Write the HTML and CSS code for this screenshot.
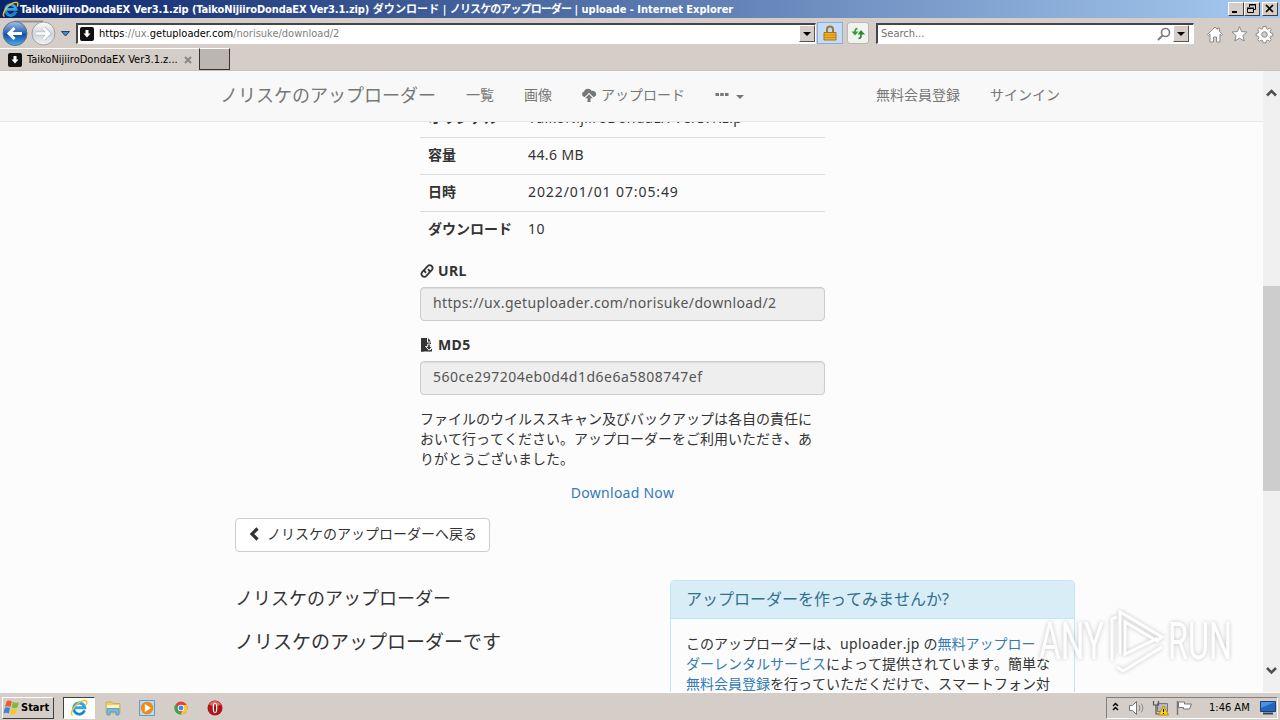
FILE: index.html
```html
<!DOCTYPE html>
<html lang="ja">
<head>
<meta charset="UTF-8" />
<title>TaikoNijiiroDondaEX Ver3.1.zip | ノリスケのアップローダー</title>
<link rel="stylesheet" href="styles.css">
</head>
<body>

<svg width="0" height="0" class="defs">
    <defs>
        <symbol id="ie" viewBox="0 0 18 18">
            <path d="M14.5 11.5A5.6 5.6 0 1 1 14.8 8.800H5" fill="none" stroke="#38a5e3" stroke-width="3"/>
            <path d="M14.5 11.5A5.6 5.6 0 0 1 4 11" fill="none" stroke="#1679c4" stroke-width="1.500"/>
            <path d="M2.500 16.500C-1 14 6 3 14 1.500c3-.5 3.500 1.500 2 4.500" fill="none" stroke="#f0c431" stroke-width="1.500"/>
        </symbol>
        <symbol id="fav" viewBox="0 0 14 14">
            <rect width="14" height="14" rx="2" fill="#111"/>
            <path d="M5.500 3h3v3.500h2L7 10.500 3.500 6.500h2z" fill="#fff"/>
        </symbol>
    </defs>
</svg>

<div class="titlebar">
    <svg class="title-icon" width="17" height="17"><use href="#ie"/></svg>
    <div class="title-text"><span class="t1">TaikoNijiiroDondaEX Ver3.1.zip (TaikoNijiiroDondaEX Ver3.1.zip)</span> <span class="tj1">ダウンロード</span> | <span class="tj2">ノリスケのアップローダー</span> | <span class="t2">uploade - Internet Explorer</span></div>
    <div class="win-buttons">
        <span class="win-btn"><svg width="13" height="11"><path d="M3 9h5" stroke="#000" stroke-width="2"/></svg></span>
        <span class="win-btn"><svg width="13" height="11"><path d="M4.500 4V1.500h6v5H9M4 2h7M2.500 5.500h6v4h-6zM2 5h7" fill="none" stroke="#000"/></svg></span>
        <span class="win-btn last"><svg width="13" height="11"><path d="M3 2l7 7M10 2L3 9" stroke="#000" stroke-width="1.700"/></svg></span>
    </div>
</div>

<div class="toolbar">
    <svg class="nav-buttons" width="74" height="30" viewBox="0 0 74 30">
        <defs>
            <linearGradient id="gb" x1="0" y1="0" x2="0" y2="1"><stop offset="0" stop-color="#a5c4ea"/><stop offset=".45" stop-color="#2c67b8"/><stop offset=".55" stop-color="#1550a5"/><stop offset="1" stop-color="#49b4f3"/></linearGradient>
            <linearGradient id="gf" x1="0" y1="0" x2="0" y2="1"><stop offset="0" stop-color="#fff"/><stop offset=".5" stop-color="#cfd3da"/><stop offset="1" stop-color="#f2f4f7"/></linearGradient>
        </defs>
        <path d="M15 3.500H43" stroke="#97918d" stroke-width="2"/>
        <circle cx="15" cy="15.500" r="12" fill="url(#gb)" stroke="#65717f"/>
        <circle cx="43.500" cy="15.500" r="11.500" fill="url(#gf)" stroke="#a09e9f"/>
        <path d="M22 15.500H9M14.500 10L9 15.500l5.500 5.500" fill="none" stroke="#fff" stroke-width="3"/>
        <path d="M36 15.500h13M43.500 10l5.500 5.500-5.500 5.500" fill="none" stroke="#b8bbc0" stroke-width="4"/>
        <path d="M36 15.500h13M43.500 10l5.500 5.500-5.500 5.500" fill="none" stroke="#fff" stroke-width="2.500"/>
        <path d="M61.500 13.500h8l-4 4.500z" fill="#3f8cd0" stroke="#1c4574"/>
    </svg>
    <div class="address">
        <svg width="14" height="14"><use href="#fav"/></svg>
        <span class="address-text"><b>https</b>://ux.<b>getuploader.com</b>/norisuke/download/2</span>
        <span class="drop"></span>
    </div>
    <div class="tool lock">
        <svg width="14" height="18" viewBox="0 0 14 18"><path d="M4 9V5.500a3 3 0 0 1 6 0V9" fill="none" stroke="#9a7a35" stroke-width="2"/><path d="M1 8.500h12v7.500H1z" fill="#eeb12d" stroke="#a9740f"/><path d="M1 11h12M1 13.500h12" stroke="#c98b14"/></svg>
    </div>
    <div class="tool refresh">
        <svg width="18" height="18" viewBox="0 0 18 18"><path d="M8.500 4.500Q6 4.500 6 8v2" fill="none" stroke="#379b38" stroke-width="1.700"/><path d="M2.500 7.500h7L6 11.500z" fill="#379b38"/><path d="M9.500 14.500q2.500 0 2.500-3V9" fill="none" stroke="#2a8c2c" stroke-width="1.700"/><path d="M8.500 10.500h7.500L12 6z" fill="#2a8c2c"/></svg>
    </div>
    <div class="search">
        <span class="search-text">Search...</span>
        <svg width="14" height="14" viewBox="0 0 14 14"><circle cx="8.500" cy="5.500" r="4" fill="none" stroke="#808080" stroke-width="1.700"/><path d="M5.500 8.500L1 13" stroke="#808080" stroke-width="2"/></svg>
        <span class="drop"></span>
    </div>
    <svg class="tool-icons" width="68" height="20" viewBox="0 0 68 20" fill="#fff" stroke="#8d8a88">
        <path d="M1.500 10.500L9 3l2.500 2.500V4h2v3.500l3 3-1 1-1.500-1.300V18h-3.500v-5h-3v5H4v-7.800l-1.500 1.300z"/>
        <path d="M33.500 2.500l2.100 5 5.400.5-4.100 3.600 1.300 5.400-4.700-2.900-4.700 2.900 1.300-5.400L26 8l5.400-.5z"/>
        <path d="M57 2.500h3l.4 2.100 1.400.6 1.900-1.200 1.600 1.700-1.200 1.900.6 1.300 2.100.5v2.500l-2.100.5-.6 1.400 1.200 1.900-1.700 1.600-1.800-1.200-1.400.6-.4 2.100h-3l-.4-2.100-1.400-.6-1.800 1.200-1.700-1.600 1.200-1.900-.6-1.400-2.100-.5V9.400l2.100-.5.6-1.300-1.200-1.900 1.700-1.700 1.800 1.200 1.400-.6z"/>
        <circle cx="58.500" cy="10.500" r="2.800" fill="#d4cdc6"/>
    </svg>
</div>

<div class="tabs">
    <div class="tab">
        <svg width="14" height="14"><use href="#fav"/></svg>
        <span class="tab-text">TaikoNijiiroDondaEX Ver3.1.z...</span>
        <svg width="8" height="8"><path d="M1 1l6 6M7 1L1 7" stroke="#8a8683" stroke-width="2"/></svg>
    </div>
    <div class="new-tab"></div>
</div>

<div class="viewport">
    <div class="page">
        <nav class="navbar">
            <a class="brand">ノリスケのアップローダー</a>
            <a>一覧</a>
            <a>画像</a>
            <a class="upload"><svg class="glyph" width="16" height="14" viewBox="0 0 16 14"><path d="M5.500 9H3.400A3 3 0 0 1 1 6.200 2.700 2.700 0 0 1 3.100 3.500 4 4 0 0 1 7 .7c1.700 0 2.800.9 3.500 2.100 2.400-.5 4.700 1 4.700 3.300 0 1.700-1.200 2.900-2.900 2.900L8 4.800 3.800 9z" fill="currentColor"/><path d="M8 6.300L11.800 10.300H9.500V14h-3v-3.700H4.200z" fill="currentColor"/></svg> アップロード</a>
            <a class="more"><svg width="14" height="14" viewBox="0 0 14 14"><path d="M.500 5h3.500v3H.5zM5.200 5h3.500v3H5.200zM10 5h3.500v3H10z" fill="currentColor"/></svg><i class="caret"></i></a>
            <span class="spacer"></span>
            <a>無料会員登録</a>
            <a>サインイン</a>
        </nav>

        <main class="content">
            <section class="detail">
                <table class="table">
                    <tr><th>オリジナル</th><td>TaikoNijiiroDondaEX Ver3.1.zip</td></tr>
                    <tr><th>容量</th><td>44.6 MB</td></tr>
                    <tr><th>日時</th><td class="date">2022/01/01 07:05:49</td></tr>
                    <tr><th>ダウンロード</th><td>10</td></tr>
                </table>
                <div class="form-group">
                    <label><svg width="14" height="14" viewBox="0 0 14 14"><g fill="none" stroke="currentColor" stroke-width="1.800" stroke-linecap="round"><path d="M5.500 8.300C4 7 4.300 5.600 5.300 4.600l2.400-2.500c2.700-2.400 6.300.8 4.200 3.700L10 7.800"/><path d="M8.500 5.700c1.500 1.300 1.200 2.700.2 3.700l-2.400 2.500C3.600 14.300 0 11.100 2.100 8.200L4 6.200"/></g></svg> URL</label>
                    <div class="input">https://ux.getuploader.com/norisuke/download/2</div>
                </div>
                <div class="form-group">
                    <label><svg width="14" height="14" viewBox="0 0 14 14"><path d="M1 0h6v4.500h4V6H7.500v2H5l3.800 4.200L10 11v2.500H1z" fill="currentColor"/><path d="M8 0l3 3.500H8z" fill="currentColor"/><path d="M7.800 6h2.400v2.500h2L9 12.200 5.800 8.500h2z" fill="currentColor" stroke="#fcfcfc" stroke-width=".8"/><path d="M1 10.500l3 3H1zM12 10.500v3H9z" fill="currentColor"/></svg> MD5</label>
                    <div class="input md5">560ce297204eb0d4d1d6e6a5808747ef</div>
                </div>
                <p>ファイルのウイルススキャン及びバックアップは各自の責任に<br>おいて行ってください。アップローダーをご利用いただき、あ<br>りがとうございました。</p>
                <div class="download"><a>Download Now</a></div>
            </section>

            <a class="btn"><svg width="14" height="14" viewBox="0 0 14 14"><path d="M9.500 1.500L4 7l5.500 5.500" fill="none" stroke="#333" stroke-width="3.200"/></svg> ノリスケのアップローダーへ戻る</a>

            <div class="row">
                <div class="about">
                    <h4>ノリスケのアップローダー</h4>
                    <h4 class="sub">ノリスケのアップローダーです</h4>
                </div>
                <div class="panel">
                    <div class="panel-heading">アップローダーを作ってみませんか?</div>
                    <div class="panel-body">このアップローダーは、<span class="latin">uploader.jp</span> の<a>無料アップロー<br>ダーレンタルサービス</a>によって提供されています。簡単な<br><a>無料会員登録</a>を行っていただくだけで、スマートフォン対</div>
                </div>
            </div>
        </main>
    </div>

    <div class="scrollbar">
        <svg width="17" height="17" viewBox="0 0 17 17"><path d="M4 11.500l4.500-4.500 4.500 4.500" fill="none" stroke="#505050" stroke-width="2.500"/></svg>
        <div class="thumb"></div>
        <svg width="17" height="17" viewBox="0 0 17 17"><path d="M4 6l4.500 4.500L13 6" fill="none" stroke="#505050" stroke-width="2.500"/></svg>
    </div>
</div>

<div class="taskbar">
    <div class="start">
        <svg width="18" height="17" viewBox="0 0 18 17"><path d="M3.500 2.500C5.500 1 7 1.500 8.800 2.500L7.500 8C5.700 7 4 6.800 2 8z" fill="#ed5b2a"/><path d="M9.800 3c2 1 4 1.200 6.200 0l-1.500 5.500c-2 1-4 .9-6 0z" fill="#7dbb3c"/><path d="M1.700 9c2-1.200 3.700-.9 5.500 0l-1.500 5.500c-1.800-1-3.500-1-5.200 0z" fill="#3c86d6"/><path d="M8.200 9.500c2 1 4 1.200 6 0l-1.500 5.500c-2 1-4 .9-6 0z" fill="#f9c52d"/></svg>
        <b>Start</b>
    </div>
    <div class="task active"><svg width="18" height="18"><use href="#ie"/></svg></div>
    <div class="task"><svg width="18" height="18" viewBox="0 0 18 18"><path d="M2 3h6l1 1.500h7V14H2z" fill="#ecd06e" stroke="#c4a44b" stroke-width=".7"/><path d="M3 6h12v3H3z" fill="#fff3bd"/><path d="M3 16V9.500h12V16h-3v-3H6v3z" fill="#78b9e2" stroke="#4b8dbb" stroke-width=".7"/></svg></div>
    <div class="task"><svg width="18" height="18" viewBox="0 0 18 18"><path d="M1.500 1.500h15v15h-15z" fill="#b8dcf5" stroke="#5c9fce"/><circle cx="9" cy="9" r="6.300" fill="#f28a16"/><path d="M6.800 5v8L13 9z" fill="#fff"/></svg></div>
    <div class="task"><svg width="18" height="18" viewBox="0 0 18 18"><circle cx="9" cy="9" r="6.500" fill="#e04234"/><path d="M3.200 6L9 9l-.5 6.500A6.500 6.500 0 0 1 3.200 6z" fill="#38a852"/><path d="M9 6h5.800A6.500 6.500 0 0 1 8.500 15.500L11.500 10z" fill="#fbc926"/><circle cx="9" cy="9" r="3.200" fill="#fff"/><circle cx="9" cy="9" r="2.400" fill="#4684ee"/></svg></div>
    <div class="task"><svg width="18" height="18" viewBox="0 0 18 18"><circle cx="9" cy="9" r="7.500" fill="#b51217"/><path d="M3 5.500a7 7 0 0 1 12 0c-3 2-8 2-12 0z" fill="#dc6764"/><ellipse cx="9" cy="9" rx="2.300" ry="5.200" fill="#fff"/><ellipse cx="9" cy="9" rx="1" ry="4.300" fill="#8f0d12"/></svg></div>
    <div class="tray">
        <svg width="94" height="20" viewBox="0 0 94 20">
            <path d="M6 8l2.500-2.500L11 8M6 12l2.500-2.500L11 12" fill="none" stroke="#000" stroke-width="1.500"/>
            <path d="M22.500 7.500h3l4-4v13l-4-4h-3z" fill="#fff" stroke="#777"/><path d="M32 7q2 3 0 6M34.500 5.500q3 4.500 0 9" fill="none" stroke="#888"/>
            <path d="M50.500 5.500h10v8h-10z" fill="#b5b9bd" stroke="#777"/><path d="M46.500 3v4h5V3M49 7v9h4" fill="none" stroke="#555" stroke-width="1.200"/><path d="M56.500 8l5 9h-10z" fill="#fcd40a" stroke="#b69009"/><path d="M56.500 11v3M56.500 15v1" stroke="#000"/>
            <path d="M70.500 3v14" stroke="#777" stroke-width="1.500"/><path d="M71.500 4h6v2h7l-2 5h-6V9.500h-5z" fill="#fff" stroke="#777"/>
        </svg>
        <span class="clock">1:46 AM</span>
        <svg class="monitor" width="16" height="14" viewBox="0 0 16 14"><path d="M.5.500h15v10H.5z" fill="#2566bd" stroke="#1b3f76"/><path d="M1 1h14L1 7z" fill="#4a91df"/><path d="M3 12.500h10" stroke="#344560" stroke-width="2"/></svg>
    </div>
</div>

<svg class="watermark" width="204" height="76" viewBox="0 0 204 76">
    <g class="mark">
        <text x="3" y="55" textLength="65" lengthAdjust="spacingAndGlyphs">ANY</text>
        <text x="132" y="55" textLength="64" lengthAdjust="spacingAndGlyphs">RUN</text>
        <path d="M76 57V15l5-2M84 50V8l42 25-5 4-32-19v32l33-16" fill="none"/>
        <path d="M81 63l6 4 39-24" fill="none"/>
    </g>
</svg>

</body>
</html>
```

FILE: styles.css
```css
* {
    box-sizing: border-box;
}
body {
    margin: 0;
    width: 1280px;
    height: 720px;
    overflow: hidden;
    display: flex;
    flex-direction: column;
    position: relative;
    background: #d5cec8;
    font: 11px/14px "DejaVu Sans Condensed", "Noto Sans CJK JP", sans-serif;
    color: #000;
}
svg {
    flex: none;
}
.defs {
    position: absolute;
}

/* window chrome */
.titlebar {
    height: 18px;
    flex: none;
    display: flex;
    align-items: center;
    padding: 0 2px;
    background: linear-gradient(90deg, #0a246a, #a6caf0);
}
.title-text {
    flex: 1;
    margin-left: 1px;
    padding-top: 1px;
    color: #fff;
    font-weight: bold;
    white-space: nowrap;
}
.t1 {
    letter-spacing: -0.11px;
}
.tj1 {
    letter-spacing: 0.1px;
}
.tj2 {
    letter-spacing: -0.9px;
}
.win-buttons {
    display: flex;
}
.win-btn {
    width: 16px;
    height: 14px;
    background: #d5cec8;
    border: 1px solid;
    border-color: #fff #404040 #404040 #fff;
}
.win-btn.last {
    margin-left: 2px;
}
.win-btn svg {
    display: block;
}
.toolbar {
    height: 30px;
    flex: none;
    display: flex;
    align-items: center;
}
.address, .search {
    display: flex;
    align-items: center;
    height: 21px;
    background: #fff;
    border: 1px solid;
    border-width: 2px 1px 1px 2px;
    border-color: #47434a #fff #fff #47434a;
    padding-left: 2px;
}
.address {
    width: 740px;
    margin-left: 2px;
    font-size: 11px;
}
.address-text {
    flex: 1;
    margin-left: 5px;
    padding-top: 1px;
    color: #808080;
}
.address-text b {
    font-weight: normal;
    color: #000;
}
.drop {
    width: 16px;
    height: 17px;
    background: #d5cec8;
    border: 1px solid;
    border-color: #fff #555 #555 #fff;
    display: flex;
    align-items: center;
    justify-content: center;
}
.drop::before {
    content: "";
    border: 4px solid transparent;
    border-top-color: #000;
    border-bottom: 0;
}
.tool {
    display: flex;
    align-items: center;
    justify-content: center;
    height: 22px;
    border: 1px solid #86aee0;
}
.lock {
    width: 26px;
    margin-left: 1px;
    background: #c4dcf8;
}
.refresh {
    width: 22px;
    margin-left: 4px;
    background: #f2f2f0;
    border-color: #bbb6b1;
    border-radius: 3px;
}
.search {
    width: 318px;
    margin-left: 7px;
    padding-right: 4px;
}
.search-text {
    flex: 1;
    margin-left: 1px;
    padding-top: 1px;
    color: #707070;
}
.search .drop {
    margin-left: 2px;
}
.tool-icons {
    margin: 2px 0 0 12px;
}
.tabs {
    height: 23px;
    flex: none;
    display: flex;
    border-bottom: 1px solid #cac3bd;
}
.tab {
    width: 199px;
    display: flex;
    align-items: center;
    padding: 1px 0 0 8px;
    border-top: 1px solid #fff;
}
.tab-text {
    margin: 0 7px 0 5px;
    width: 150px;
    white-space: nowrap;
}
.new-tab {
    width: 31px;
    height: 22px;
    background: #bdb5b0;
    border: 1px solid #333;
    border-top-color: #fff;
}

/* page */
.viewport {
    height: 621px;
    flex: none;
    display: flex;
}
.page {
    width: 1263px;
    height: 621px;
    overflow: hidden;
    display: flex;
    flex-direction: column;
    background: #fcfcfc;
    color: #333;
    font: 14px/20px "Noto Sans", "Noto Sans CJK JP", sans-serif;
    font-kerning: none;
}
.page a {
    color: #337ab7;
}
.page td, .latin, label {
    letter-spacing: 0.4px;
}
.page .date {
    letter-spacing: 0.9px;
}
.navbar {
    height: 51px;
    flex: none;
    display: flex;
    padding: 0 188px 0 205px;
    background: #f8f8f8;
    border-bottom: 1px solid #e7e7e7;
}
.page .navbar a {
    padding: 12px 15px 15px;
    color: #777;
    display: flex;
    align-items: center;
    white-space: nowrap;
}
.page .navbar .brand {
    font-size: 18px;
}
.page .navbar .upload {
    padding-left: 14px;
}
.glyph {
    margin-right: 4px;
}
.navbar .spacer {
    flex: 1;
}
.caret {
    border: 4px solid transparent;
    border-top-color: #777;
    border-bottom: 0;
    margin: 5px 0 0 7px;
}
.content {
    flex: 1;
    min-height: 0;
    overflow: hidden;
    padding-left: 235px;
}
.detail {
    width: 405px;
    margin: -22px 0 0 185px;
}
.table {
    width: 100%;
    border-collapse: collapse;
    margin-bottom: 13px;
}
.table tr {
    height: 37px;
}
.table th, .table td {
    padding: 7px 8px 9px;
    border-top: 1px solid #ddd;
    text-align: left;
    height: 37px;
}
.table th {
    width: 100px;
    white-space: nowrap;
}
.form-group {
    margin-bottom: 15px;
}
.form-group label {
    display: flex;
    align-items: center;
    gap: 4px;
    height: 20px;
    padding-bottom: 2px;
    margin-bottom: 5px;
    font-weight: bold;
}
.input {
    height: 34px;
    padding: 5px 12px;
    background: #eee;
    border: 1px solid #ccc;
    border-radius: 4px;
    box-shadow: inset 0 1px 1px rgba(0, 0, 0, .075);
    color: #555;
    letter-spacing: 0.35px;
}
.md5 {
    letter-spacing: 0.5px;
}
.detail p {
    margin: -1px 0 14px;
    white-space: nowrap;
}
.download {
    text-align: center;
    margin-bottom: 15px;
    letter-spacing: 0.25px;
}
.page .btn {
    display: flex;
    align-items: center;
    gap: 5px;
    width: 255px;
    height: 34px;
    padding: 0 12px 2px;
    background: #fff;
    border: 1px solid #ccc;
    border-radius: 4px;
    color: #333;
    white-space: nowrap;
}
.row {
    display: flex;
    margin-top: 28px;
}
.about {
    width: 435px;
}
.about h4 {
    margin: 8px 0 24px;
    font-size: 18px;
    line-height: 20px;
    font-weight: normal;
}
.about .sub {
    font-size: 19px;
}
.panel {
    width: 405px;
    height: 200px;
    border: 1px solid #bce8f1;
    border-radius: 4px;
    background: #fcfcfc;
}
.panel-heading {
    height: 38px;
    padding: 9px 15px;
    font-size: 16px;
    line-height: 19px;
    background: #d9edf7;
    border-bottom: 1px solid #bce8f1;
    color: #31708f;
}
.panel-body {
    padding: 15px;
    white-space: nowrap;
}
.scrollbar {
    width: 17px;
    display: flex;
    flex-direction: column;
    background: #f0f0f0;
    padding: 13px 0;
}
.thumb {
    height: 205px;
    margin: 185px 0 auto;
    background: #cdcdcd;
}

/* taskbar */
.taskbar {
    height: 28px;
    flex: none;
    display: flex;
    align-items: center;
    padding: 2px 2px 0;
    border-top: 1px solid #fff;
}
.start {
    display: flex;
    align-items: center;
    width: 52px;
    height: 22px;
    border: 1px solid;
    border-color: #fff #404040 #404040 #fff;
    margin-right: 9px;
}
.task {
    width: 34px;
    height: 22px;
    display: flex;
    align-items: center;
    justify-content: center;
}
.task.active {
    width: 32px;
    margin-right: 1px;
    background: #fff;
    border: 1px solid;
    border-color: #404040 #fff #fff #404040;
}
.tray {
    display: flex;
    align-items: center;
    width: 172px;
    height: 22px;
    margin-left: auto;
    border: 1px solid;
    border-color: #808080 #fff #fff #808080;
}
.clock {
    margin-left: 8px;
    width: 45px;
    white-space: nowrap;
}
.monitor {
    margin-left: 6px;
}

.watermark {
    position: absolute;
    left: 1036px;
    top: 604px;
    filter: drop-shadow(0 0 2px rgba(0, 0, 0, .3));
    opacity: .75;
}
.mark {
    font: 52px "Roboto", sans-serif;
    fill: #fff;
    stroke: #fff;
    stroke-width: 3;
}
.mark text {
    stroke-width: 0;
}
```
